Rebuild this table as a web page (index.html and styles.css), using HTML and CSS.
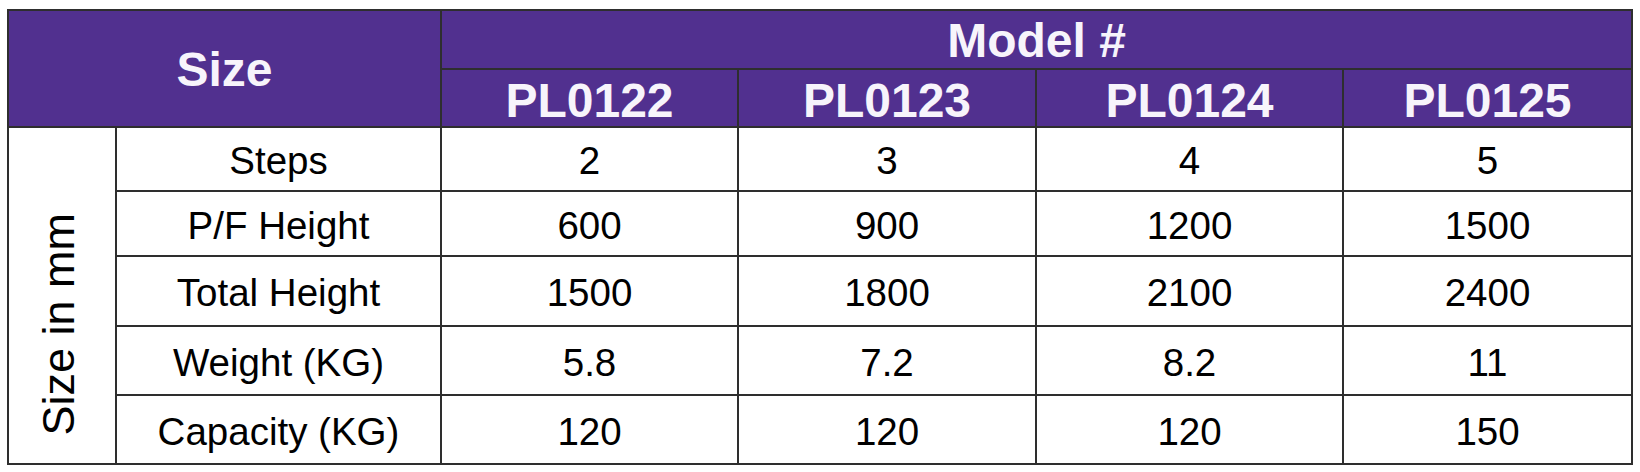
FILE: index.html
```html
<!DOCTYPE html>
<html>
<head>
<meta charset="utf-8">
<link rel="stylesheet" href="styles.css">
</head>
<body>
<div class="spec">
  <div class="cell head size-head">Size</div>
  <div class="cell head model-head">Model #</div>
  <div class="cell head model">PL0122</div>
  <div class="cell head model">PL0123</div>
  <div class="cell head model">PL0124</div>
  <div class="cell head model">PL0125</div>

  <div class="cell side"><span class="side-text">Size in mm</span></div>

  <div class="cell label">Steps</div>
  <div class="cell val">2</div>
  <div class="cell val">3</div>
  <div class="cell val">4</div>
  <div class="cell val">5</div>

  <div class="cell label">P/F Height</div>
  <div class="cell val">600</div>
  <div class="cell val">900</div>
  <div class="cell val">1200</div>
  <div class="cell val">1500</div>

  <div class="cell label">Total Height</div>
  <div class="cell val">1500</div>
  <div class="cell val">1800</div>
  <div class="cell val">2100</div>
  <div class="cell val">2400</div>

  <div class="cell label">Weight (KG)</div>
  <div class="cell val">5.8</div>
  <div class="cell val">7.2</div>
  <div class="cell val">8.2</div>
  <div class="cell val">11</div>

  <div class="cell label">Capacity (KG)</div>
  <div class="cell val">120</div>
  <div class="cell val">120</div>
  <div class="cell val">120</div>
  <div class="cell val">150</div>
</div>
</body>
</html>
```

FILE: styles.css
```css
html, body {
  margin: 0;
  background: #ffffff;
}
body {
  padding: 9px 0 0 7px;
  font-family: "Liberation Sans", Arial, sans-serif;
  color: #000;
}
.spec {
  display: grid;
  width: 1626px;
  box-sizing: border-box;
  grid-template-columns: 108px 325px 297px 298px 307px 289px;
  grid-template-rows: 59px 58px 64px 65px 70px 69px 69px;
  border-left: 2px solid #2e2e2e;
  border-top: 2px solid #2e2e2e;
}
.cell {
  box-sizing: border-box;
  border-right: 2px solid #2e2e2e;
  border-bottom: 2px solid #2e2e2e;
  display: flex;
  align-items: center;
  justify-content: center;
  white-space: nowrap;
}
.head {
  background: #51308f;
  color: #f7f4fb;
  font-weight: bold;
  font-size: 48px;
}
.size-head {
  grid-column: 1 / 3;
  grid-row: 1 / 3;
  padding-top: 1px;
}
.model-head {
  grid-column: 3 / 7;
  grid-row: 1;
  padding-top: 2px;
}
.model {
  grid-row: 2;
  padding-top: 4px;
}
.side {
  grid-column: 1;
  grid-row: 3 / 8;
  padding-top: 58px;
  padding-right: 6px;
}
.side-text {
  writing-mode: vertical-rl;
  transform: rotate(180deg);
  font-size: 45px;
}
.label, .val {
  font-size: 38.5px;
  padding-top: 4px;
}
```
